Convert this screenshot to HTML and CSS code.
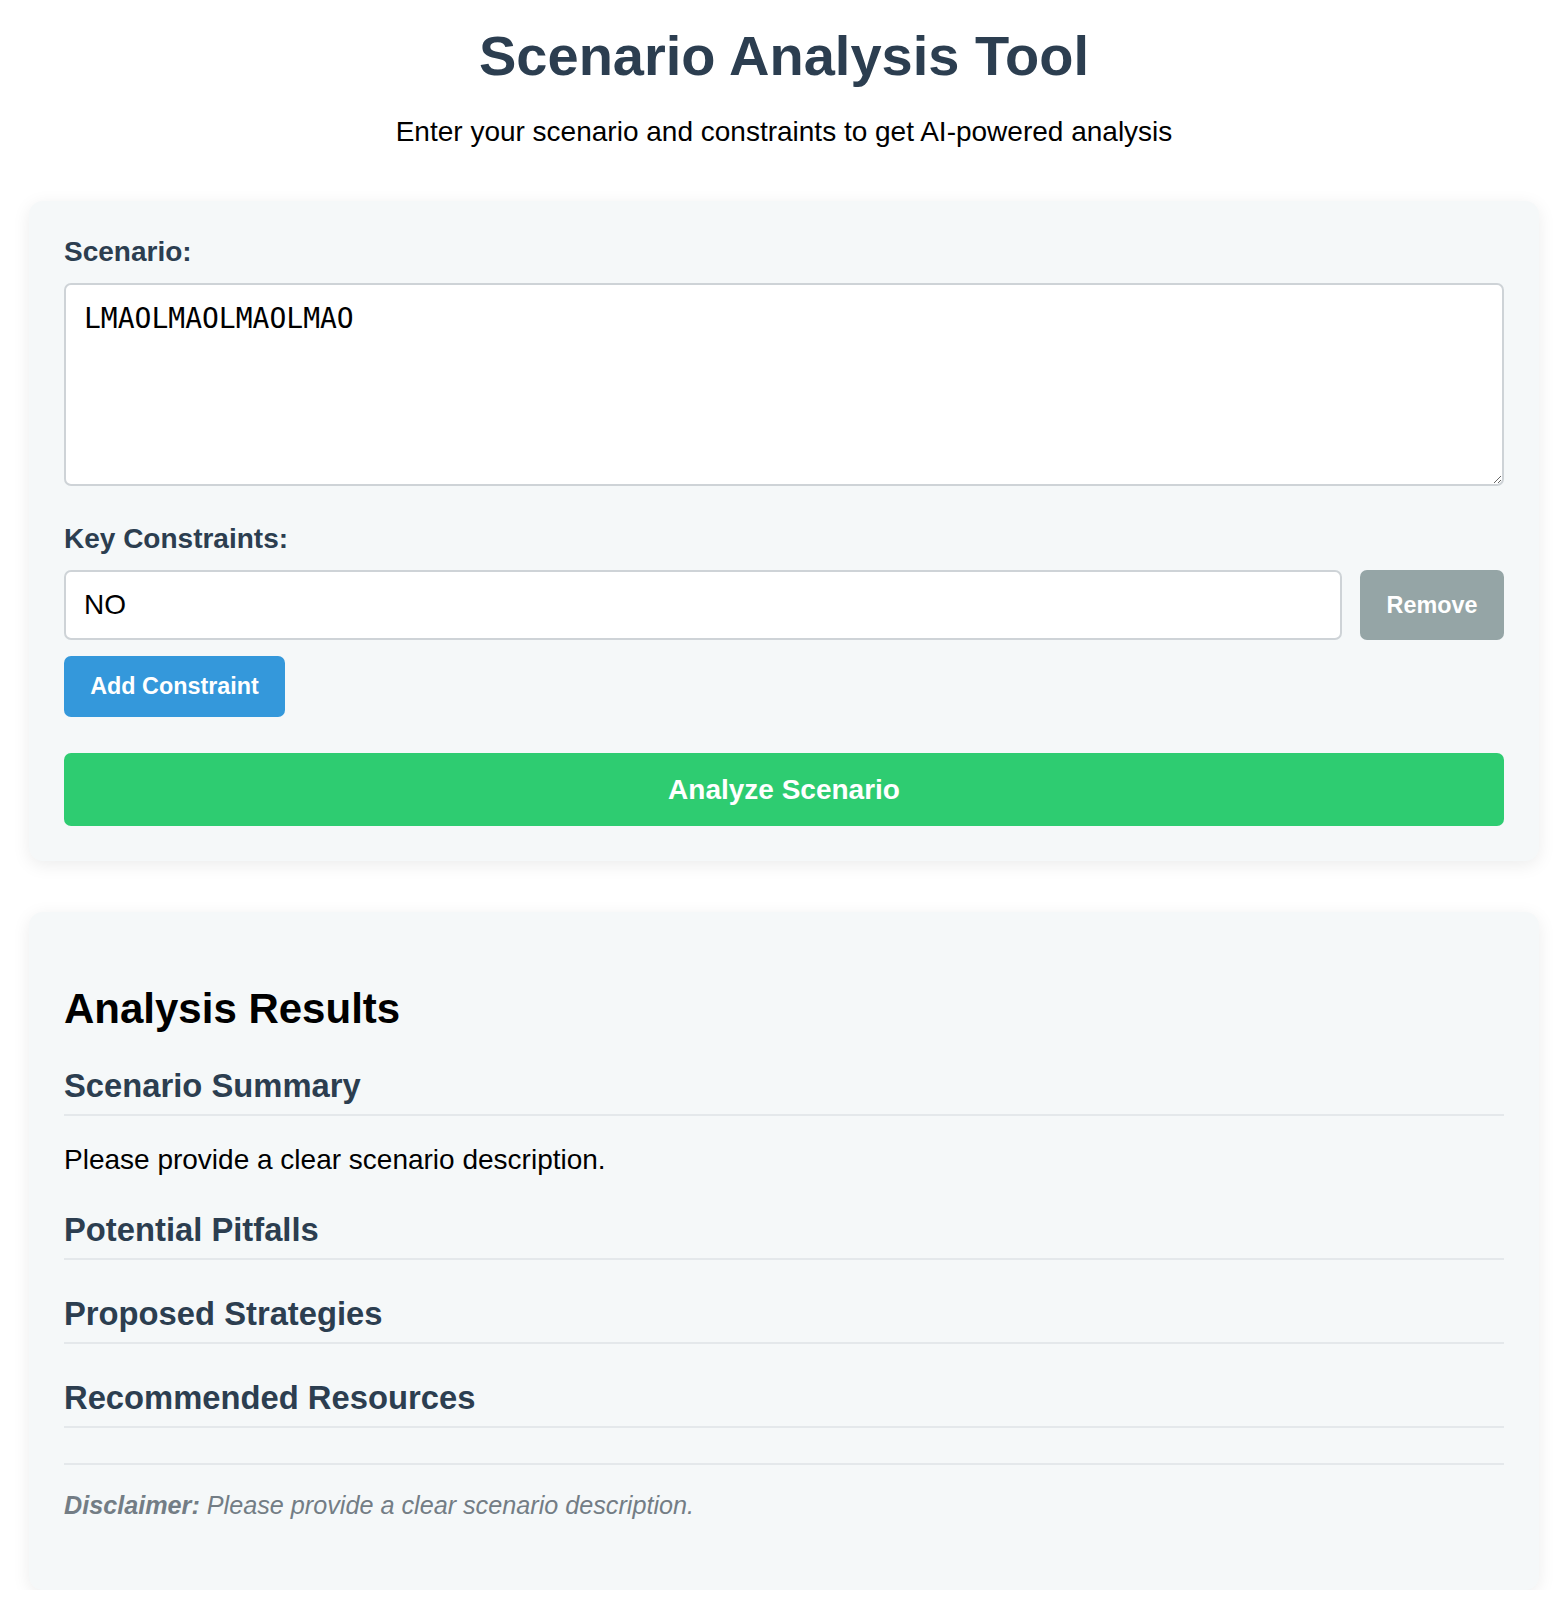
FILE: index.html
```html
<!DOCTYPE html>
<html lang="en">
<head>
<meta charset="utf-8">
<title>Scenario Analysis Tool</title>
<link rel="stylesheet" href="styles.css">
</head>
<body>
<div class="container">
  <header class="header">
    <h1 class="title">Scenario Analysis Tool</h1>
    <p class="subtitle">Enter your scenario and constraints to get AI-powered analysis</p>
  </header>

  <section class="card form-card">
    <div class="form-group">
      <label class="label" for="scenario">Scenario:</label>
      <textarea id="scenario" class="textarea">LMAOLMAOLMAOLMAO</textarea>
    </div>
    <div class="form-group constraints">
      <label class="label" for="c1">Key Constraints:</label>
      <div class="constraint-row">
        <input id="c1" class="input" type="text" value="NO">
        <button class="btn btn-remove" type="button">Remove</button>
      </div>
      <button class="btn btn-add" type="button">Add Constraint</button>
    </div>
    <button class="btn btn-analyze" type="button">Analyze Scenario</button>
  </section>

  <section class="card results-card">
    <h2 class="results-title">Analysis Results</h2>
    <div class="section">
      <h3 class="section-title">Scenario Summary</h3>
      <p class="section-text">Please provide a clear scenario description.</p>
    </div>
    <div class="section">
      <h3 class="section-title">Potential Pitfalls</h3>
    </div>
    <div class="section">
      <h3 class="section-title">Proposed Strategies</h3>
    </div>
    <div class="section">
      <h3 class="section-title">Recommended Resources</h3>
    </div>
    <div class="disclaimer"><strong>Disclaimer:</strong> Please provide a clear scenario description.</div>
  </section>
</div>
</body>
</html>
```

FILE: styles.css
```css
* {
  box-sizing: border-box;
}

html, body {
  margin: 0;
  padding: 0;
  background: #ffffff;
}

body {
  font-family: "Liberation Sans", Arial, sans-serif;
  color: #000;
}

.container {
  width: 1510px;
  margin-left: 29px;
}

.header {
  padding-top: 23px;
  margin-bottom: 53px;
  text-align: center;
}

.title {
  margin: 0;
  font-size: 56px;
  font-weight: 700;
  color: #2c3e50;
  line-height: normal;
}

.subtitle {
  margin: 28px 0 0;
  font-size: 28px;
  color: #000;
}

.card {
  background: #f5f8f9;
  border-radius: 14px;
  padding: 35px;
  box-shadow: 0 4px 18px rgba(0, 0, 0, 0.08);
}

.form-card {
  margin-bottom: 51px;
}

.form-group {
  margin-bottom: 37px;
}

.form-group.constraints {
  margin-bottom: 36px;
}

.label {
  display: block;
  font-size: 28px;
  font-weight: 700;
  color: #2c3e50;
  margin-bottom: 15px;
}

.textarea {
  display: block;
  width: 100%;
  height: 203px;
  padding: 17px 18px;
  border: 2px solid #ced3d7;
  border-radius: 7px;
  background: #fff;
  font-family: "DejaVu Sans Mono", monospace;
  font-size: 28px;
  color: #000;
  resize: vertical;
}

.constraint-row {
  display: flex;
  gap: 18px;
  margin-bottom: 16px;
}

.input {
  flex: 1;
  height: 70px;
  padding: 0 18px;
  border: 2px solid #ced3d7;
  border-radius: 7px;
  background: #fff;
  font-family: "Liberation Sans", Arial, sans-serif;
  font-size: 28px;
  color: #000;
}

.btn {
  border: none;
  border-radius: 7px;
  color: #fff;
  font-family: "Liberation Sans", Arial, sans-serif;
  font-weight: 700;
  cursor: pointer;
}

.btn-remove {
  background: #95a5a6;
  font-size: 23.33px;
  padding: 0 26px;
  width: 144px;
}

.btn-add {
  background: #3498db;
  font-size: 23.33px;
  padding: 17px 26px;
  height: 61px;
  width: 221px;
}

.btn-analyze {
  display: block;
  width: 100%;
  height: 73px;
  background: #2ecc71;
  font-size: 28px;
}

.results-title {
  margin: 38px 0 34px;
  font-size: 42px;
  font-weight: 700;
  color: #000;
}

.section {
  margin-bottom: 35px;
}

.section-title {
  margin: 0 0 17px;
  padding-bottom: 9px;
  border-bottom: 2px solid #e4e8eb;
  font-size: 32.76px;
  font-weight: 700;
  color: #2c3e50;
}

.section-text {
  margin: 28px 0;
  font-size: 28px;
  color: #000;
}

.disclaimer {
  margin: 35px 0;
  padding-top: 26px;
  border-top: 2px solid #e4e8eb;
  font-size: 25.2px;
  font-style: italic;
  color: #737d85;
}

.disclaimer strong {
  font-weight: 700;
}
```
